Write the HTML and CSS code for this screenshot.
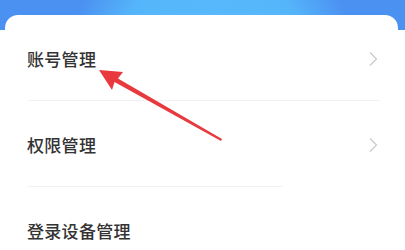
FILE: index.html
```html
<!DOCTYPE html>
<html lang="zh">
<head>
<meta charset="utf-8">
<link rel="stylesheet" href="styles.css">
</head>
<body>
<div class="page">
  <div class="header"></div>
  <div class="card">
    <div class="row">
      <span class="label">账号管理</span>
      <svg class="chev" width="10" height="16" viewBox="0 0 10 16"><path d="M2 1.5 L8.5 8 L2 14.5" fill="none" stroke="#c9c9c9" stroke-width="1.2"/></svg>
    </div>
    <div class="divider"></div>
    <div class="row">
      <span class="label">权限管理</span>
      <svg class="chev" width="10" height="16" viewBox="0 0 10 16"><path d="M2 1.5 L8.5 8 L2 14.5" fill="none" stroke="#c9c9c9" stroke-width="1.2"/></svg>
    </div>
    <div class="divider short"></div>
    <div class="row">
      <span class="label">登录设备管理</span>
    </div>
  </div>
  <svg class="arrow" width="405" height="250" viewBox="0 0 405 250">
    <polygon points="99,70 123,72 118,78.5 222,139 221,141 114.5,82 112,90" fill="#e8393e"/>
  </svg>
</div>
</body>
</html>
```
FILE: styles.css
```css
html, body {
  margin: 0;
  padding: 0;
}
body {
  width: 405px;
  height: 250px;
  overflow: hidden;
  background: #ffffff;
  font-family: "Noto Sans CJK SC", "Noto Sans", sans-serif;
}
.page {
  position: relative;
  width: 405px;
  height: 250px;
  overflow: hidden;
  background:
    radial-gradient(ellipse 140px 110px at 212px 45px, #58bcfb 0%, #55b5fa 65%, rgba(76,147,241,0) 100%) 0 0 / 405px 30px no-repeat,
    linear-gradient(#4b91f1, #4b91f1) 0 0 / 405px 30px no-repeat,
    #ffffff;
}
.header {
  height: 15px;
}
.card {
  margin: 0 7px 0 5px;
  background: #ffffff;
  border-radius: 13px 13px 0 0;
}
.row {
  display: flex;
  align-items: center;
  justify-content: space-between;
  padding: 32px 20px 29px 22px;
  height: 24px;
}
.label {
  font-size: 17px;
  line-height: 24px;
  font-weight: 500;
  color: #333333;
  letter-spacing: 0.3px;
}
.chev {
  display: block;
}
.divider {
  height: 1px;
  margin: 0 18px 0 23px;
  background: #f2f2f2;
}
.divider.short {
  margin-right: 115px;
}
.arrow {
  position: absolute;
  left: 0;
  top: 0;
}
```
